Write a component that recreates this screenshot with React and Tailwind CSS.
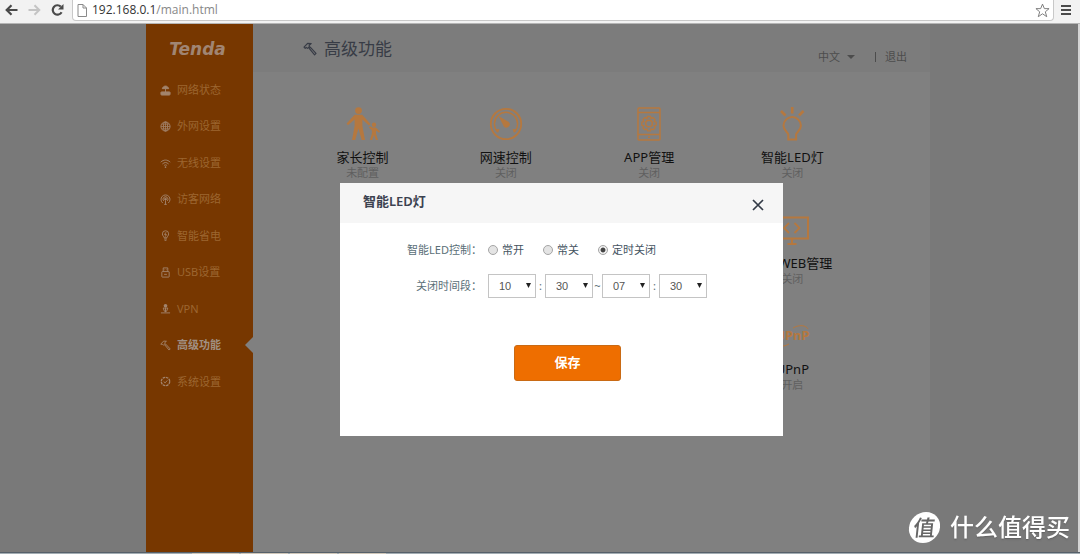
import { useState } from 'react';

const menu = [
  { id: 'status', label: '网络状态' },
  { id: 'wan', label: '外网设置' },
  { id: 'wifi', label: '无线设置' },
  { id: 'guest', label: '访客网络' },
  { id: 'power', label: '智能省电' },
  { id: 'usb', label: 'USB设置' },
  { id: 'vpn', label: 'VPN' },
  { id: 'advanced', label: '高级功能' },
  { id: 'system', label: '系统设置' },
];

const features = [
  { id: 'parent', label: '家长控制', status: '未配置' },
  { id: 'speed', label: '网速控制', status: '关闭' },
  { id: 'app', label: 'APP管理', status: '关闭' },
  { id: 'led', label: '智能LED灯', status: '关闭' },
  { id: 'web', label: '远程WEB管理', status: '关闭', lastColumn: true },
  { id: 'upnp', label: 'UPnP', status: '开启', lastColumn: true },
];

const modes = [
  { value: 'on', label: '常开' },
  { value: 'off', label: '常关' },
  { value: 'timer', label: '定时关闭' },
];

const hours = Array.from({ length: 24 }, (_, i) => String(i).padStart(2, '0'));
const minutes = ['00', '10', '20', '30', '40', '50'];

function Hammer({ className }) {
  return (
    <svg viewBox="0 0 14 14" className={className} fill="none" stroke="currentColor" strokeWidth="1.200" strokeLinejoin="round">
      <path d="M1 5.200 4.600 1.400 8.200 1.600 6.200 3.200 6.400 4.600 4.400 6.400 3.200 5.400 2.200 6.400Z" />
      <path d="M6 6.200 7.200 5.200 13 11.400 11.600 12.800Z" />
    </svg>
  );
}

function MenuIcon({ id }) {
  if (id === 'advanced') return <Hammer className="w-[11px] h-[11px] shrink-0" />;
  return (
    <svg viewBox="0 0 12 12" className="w-[11px] h-[11px] shrink-0" fill="none" stroke="currentColor">
      {id === 'status' && (
        <>
          <path d="M2.500 4C3.500 .2 8.500 .2 9.500 4ZM6 4V8" fill="currentColor" />
          <rect x="1" y="7.500" width="10" height="3.500" rx=".8" fill="currentColor" />
        </>
      )}
      {id === 'wan' && (
        <>
          <circle cx="6" cy="6" r="5" />
          <ellipse cx="6" cy="6" rx="2.300" ry="5" />
          <path d="M1 6h10M1.800 3.500h8.400M1.800 8.500h8.400M6 1v10" strokeWidth=".8" />
        </>
      )}
      {id === 'wifi' && (
        <>
          <path d="M.8 4.500C4 1.500 8 1.500 11.200 4.500M2.600 6.500C5 4.400 7 4.400 9.400 6.500M4.300 8.300C5.500 7.300 6.500 7.300 7.700 8.300" />
          <circle cx="6" cy="10" r=".9" fill="currentColor" stroke="none" />
        </>
      )}
      {id === 'guest' && (
        <>
          <path d="M3 9.800A4.900 4.900 0 1 1 9 9.800M4 7.500A2.700 2.700 0 1 1 8 7.500" />
          <circle cx="6" cy="5.600" r="1" fill="currentColor" />
          <path d="M6 7v4.500M4.600 11.300h2.800" />
        </>
      )}
      {id === 'power' && (
        <>
          <path d="M4.500 8.500C4.500 7 2.600 6.500 2.600 4.200A3.400 3.400 0 0 1 9.400 4.200C9.400 6.500 7.500 7 7.500 8.500Z" />
          <path d="M6.500 2.500 5 5h2L5.700 7.300M4.500 9.800h3M5 11.300h2" />
        </>
      )}
      {id === 'usb' && (
        <>
          <rect x="2" y="5" width="8" height="6" rx=".5" />
          <path d="M3.500 5V1h5v4M5 3h.6M6.700 3h.6M4.500 8h3" />
        </>
      )}
      {id === 'vpn' && (
        <>
          <circle cx="6" cy="3" r="2" fill="currentColor" stroke="none" />
          <path d="M3.500 5.500H8.500L7.200 9H4.800ZM6 5v5M1 10.800h10" />
        </>
      )}
      {id === 'system' && (
        <>
          <circle cx="6" cy="6" r="4.600" strokeWidth="1.400" strokeDasharray="2.800 .8" />
          <path d="M4 6 5.600 7.500 8 4.800" />
        </>
      )}
    </svg>
  );
}

function FeatureIcon({ id }) {
  return (
    <svg viewBox="0 0 34 34" className="w-[34px] h-[34px]" fill="none" stroke="currentColor" strokeWidth="1.500">
      {id === 'parent' && (
        <g fill="currentColor" stroke="none">
          <circle cx="12.500" cy="3.600" r="3.400" />
          <path d="M8.600 7.800h7.600l8.300 9.200-1.600 1.600-6.500-6v6.400l2.600 14h-3.300l-3.300-11.600L9.200 33H6l2.600-14v-6.400L2 18.200.6 16.600Z" />
          <circle cx="28" cy="17.800" r="2.200" />
          <path d="M26.400 20.500h3.400l4.200 4-1 1.200-3-2.200v3l2 6.500h-2.200l-1.800-5-1.900 5h-2.200l2-6.500v-3l-2.900-3 1-1.200Z" />
        </g>
      )}
      {id === 'speed' && (
        <>
          <circle cx="17" cy="17" r="15.200" strokeWidth="1.800" />
          <path d="M8.200 24.500A11.600 11.600 0 1 1 25.800 24.500" />
          <path d="M6 22.500l4.500-.5-1.500 4ZM28 22.500l-4.500-.5 1.500 4Z" fill="currentColor" stroke="none" />
          <path d="M9.500 9 19.800 15A3.200 3.200 0 0 1 14.800 19.500Z" fill="currentColor" stroke="none" />
        </>
      )}
      {id === 'app' && (
        <>
          <rect x="6" y="1" width="22" height="32" rx="1" />
          <path d="M6 5.500h22M6 27.500h22M16 30.300h2" />
          <circle cx="17" cy="16.500" r="3.300" />
          <path d="M15.500 9.500h3l.6 2 2-.9 2 2-.9 2 2 .6v3l-2 .6.9 2-2 2-2-.9-.6 2h-3l-.6-2-2 .9-2-2 .9-2-2-.6v-3l2-.6-.9-2 2-2 2 .9Z" strokeWidth="1.300" />
        </>
      )}
      {id === 'led' && (
        <>
          <path d="M13.300 32.500V27.500C13.300 25.500 8.500 23.500 8.500 18.800A8.700 8.700 0 0 1 25.900 18.800C25.900 23.500 21.100 25.500 21.100 27.500V32.500Z" strokeWidth="2" />
          <path d="M17.200 0v6.500M6 4l4.500 4.500M28.500 4 24 8.500" strokeWidth="2.600" />
        </>
      )}
      {id === 'web' && (
        <>
          <rect x="1" y="4.500" width="32" height="21" strokeWidth="2" />
          <path d="M14 10 9 15l5 5M19.500 10l5 5-5 5" strokeWidth="1.800" />
          <path d="M17 26v4.500M12.500 31h9" strokeWidth="2" />
        </>
      )}
    </svg>
  );
}

function UpnpMark() {
  return (
    <span className="relative flex h-[34px] items-center font-bold text-[13px]">
      UPnP
      <svg viewBox="0 0 40 24" className="absolute -left-1 top-[5px] w-10 h-6" fill="none" stroke="currentColor">
        <path d="M22 4C28 .5 35 1 37 5M18 20C12 23.500 4 23 3 19" />
      </svg>
    </span>
  );
}

function TimeSelect({ label, options, value, onChange }) {
  return (
    <span className="relative flex">
      <select
        aria-label={label}
        value={value}
        onChange={(e) => onChange(e.target.value)}
        className="appearance-none w-12 h-6 pl-[10px] border border-[#c4c4c4] bg-white text-[11px] text-[#555] font-['Liberation_Sans',sans-serif]"
      >
        {options.map((option) => (
          <option key={option}>{option}</option>
        ))}
      </select>
      <svg viewBox="0 0 6 6" className="pointer-events-none absolute right-[5px] top-[9px] w-[5px] h-[5px]" fill="#222">
        <path d="M0 0h6L3 6Z" />
      </svg>
    </span>
  );
}

function BrowserBar() {
  return (
    <div className="flex h-6 shrink-0 border-b border-[#b5b5b5] bg-[#f2f2f2] text-[#4a4a4a]">
      <div className="flex w-[72px] items-center gap-[10px] pl-[5px] pb-1">
        <button aria-label="后退">
          <svg viewBox="0 0 13 12" className="w-[13px] h-3" fill="none" stroke="currentColor" strokeWidth="2.200">
            <path d="M12.500 6H2M6.500 1.200 1.700 6l4.800 4.800" />
          </svg>
        </button>
        <button aria-label="前进" className="text-[#c4c4c4]">
          <svg viewBox="0 0 13 12" className="w-[13px] h-3" fill="none" stroke="currentColor" strokeWidth="2">
            <path d="M.5 6H11M6.500 1.200 11.300 6l-4.800 4.800" />
          </svg>
        </button>
        <button aria-label="刷新">
          <svg viewBox="0 0 13 12" className="w-[13px] h-3" fill="none" stroke="currentColor" strokeWidth="2.200">
            <path d="M10.600 8.200A4.700 4.700 0 1 1 9.800 2.600" />
            <path d="M12.500 0v5.500H7Z" fill="currentColor" stroke="none" />
          </svg>
        </button>
      </div>
      <div className="flex h-[21px] flex-1 items-center rounded-b-sm border border-t-0 border-[#c8c8c8] bg-white pl-1 pr-[3px]">
        <svg viewBox="0 0 10 13" className="w-[10px] h-[13px]" fill="none" stroke="#8a8a8a">
          <path d="M1 .5h5L9.500 4v8.500H1ZM6 .5V4h3.500" />
        </svg>
        <p className="ml-[5px] flex-1 text-[12px] leading-5 text-[#888] font-['Open_Sans',sans-serif]">
          <span className="text-[#333]">192.168.0.1</span>/main.html
        </p>
        <button aria-label="收藏">
          <svg viewBox="0 0 16 16" className="w-[15px] h-[15px]" fill="none" stroke="#777">
            <path d="M8 1.200 10 6h5l-4 3.400 1.500 5.200L8 11.500l-4.500 3.100L5 9.400 1 6h5Z" strokeLinejoin="round" />
          </svg>
        </button>
      </div>
      <button aria-label="菜单" className="flex w-[26px] flex-col gap-[2px] pl-[7px] pt-[5px]">
        <span className="h-[2px] w-[10px] bg-[#4a4a4a]" />
        <span className="h-[2px] w-[10px] bg-[#4a4a4a]" />
        <span className="h-[2px] w-[10px] bg-[#4a4a4a]" />
      </button>
    </div>
  );
}

function Sidebar() {
  return (
    <aside className="w-[107px] shrink-0 bg-[#773700]">
      <div className="flex h-12 items-center justify-center pt-1 pr-1 font-['DejaVu_Sans',sans-serif] text-[17px] font-bold italic text-[#a08573]">
        Tenda
      </div>
      <nav className="grid h-[328px] grid-rows-9">
        {menu.map((item) => (
          <a
            key={item.id}
            href={`#${item.id}`}
            className={
              item.id === 'advanced'
                ? 'relative flex items-center gap-[6px] pl-[14px] text-[11px] font-bold text-[#a08f82]'
                : 'relative flex items-center gap-[6px] pl-[14px] text-[11px] text-[#9c6630]'
            }
          >
            <span className="text-[#a3846c]">
              <MenuIcon id={item.id} />
            </span>
            {item.label}
            {item.id === 'advanced' && (
              <span className="absolute right-0 top-1/2 -translate-y-1/2 border-y-8 border-r-8 border-y-transparent border-r-[#808080]" />
            )}
          </a>
        ))}
      </nav>
    </aside>
  );
}

function LedDialog() {
  const [mode, setMode] = useState('timer');
  const [time, setTime] = useState({ fromHour: '10', fromMinute: '30', toHour: '07', toMinute: '30' });

  const update = (key) => (value) => setTime((prev) => ({ ...prev, [key]: value }));

  return (
    <div className="fixed inset-0 flex items-start justify-center pl-[43px] pt-[183px]">
      <div role="dialog" aria-labelledby="led-title" className="w-[443px] bg-white pb-[55px]">
        <div className="flex h-10 items-start justify-between bg-[#f6f6f6] pl-[23px] pr-[19px]">
          <h2 id="led-title" className="pt-2 text-[13px] leading-5 font-semibold text-[#3c4250]">智能LED灯</h2>
          <button aria-label="关闭" className="pt-4 text-[#333b47]">
            <svg viewBox="0 0 12 12" className="w-3 h-3" fill="none" stroke="currentColor" strokeWidth="1.700">
              <path d="M1 1l10 10M11 1 1 11" />
            </svg>
          </button>
        </div>

        <form onSubmit={(e) => e.preventDefault()} className="pt-[17px] text-[11px] text-[#5b6f78]">
          <fieldset className="flex h-5 items-center">
            <legend className="float-left w-[142px] text-right leading-5">智能LED控制：</legend>
            <div className="flex items-center gap-[19px] pl-[6px] text-[#44535f]">
              {modes.map((item) => (
                <label key={item.value} className="flex items-center gap-1">
                  <input
                    type="radio"
                    name="mode"
                    checked={mode === item.value}
                    onChange={() => setMode(item.value)}
                    className="appearance-none w-[10px] h-[10px] rounded-full border border-[#a5a5a5] bg-[#e4e4e4] checked:bg-radial checked:from-[#444] checked:from-35% checked:to-[#eee] checked:to-50%"
                  />
                  {item.label}
                </label>
              ))}
            </div>
          </fieldset>

          <div className="mt-[14px] flex items-center">
            <span className="w-[142px] text-right">关闭时间段：</span>
            <div className="flex items-center pl-[6px]">
              <TimeSelect label="开始小时" options={hours} value={time.fromHour} onChange={update('fromHour')} />
              <span className="w-[9px] text-center">:</span>
              <TimeSelect label="开始分钟" options={minutes} value={time.fromMinute} onChange={update('fromMinute')} />
              <span className="w-[9px] text-center">~</span>
              <TimeSelect label="结束小时" options={hours} value={time.toHour} onChange={update('toHour')} />
              <span className="w-[9px] text-center">:</span>
              <TimeSelect label="结束分钟" options={minutes} value={time.toMinute} onChange={update('toMinute')} />
            </div>
          </div>

          <div className="mt-[47px] flex justify-center pl-3">
            <button className="h-9 w-[107px] rounded-[3px] border border-[#c96a14] bg-[#ee6e00] text-[13px] font-bold text-white">
              保存
            </button>
          </div>
        </form>
      </div>
    </div>
  );
}

export default function App() {
  return (
    <div className="flex h-screen flex-col overflow-hidden bg-[#797979] font-['Noto_Sans','Noto_Sans_CJK_SC',sans-serif]">
      <BrowserBar />

      <div className="flex flex-1 justify-center border-r-2 border-[#d5d5d5] pr-[2px]">
        <Sidebar />
        <main className="w-[677px] bg-[#808080]">
          <header className="flex h-12 items-center justify-between bg-[#7c7c7c] pl-[50px] pr-[23px]">
            <h1 className="flex items-center gap-[7px] pt-[2px] text-[17px] text-[#383c46]">
              <Hammer className="w-[14px] h-[14px]" />
              高级功能
            </h1>
            <div className="flex items-center pt-[18px] text-[11px] text-[#4c4c4c]">
              <button className="flex items-center gap-[7px]">
                中文
                <span className="border-x-4 border-t-4 border-x-transparent border-t-[#4c4c4c]" />
              </button>
              <span className="ml-5 h-[10px] w-px bg-[#4c4c4c]" />
              <a href="#logout" className="ml-[9px]">退出</a>
            </div>
          </header>

          <section className="grid grid-cols-4 gap-y-[33px] pl-[38px] pr-[66px] pt-[35px]">
            {features.map((item) => (
              <a
                key={item.id}
                href={`#${item.id}`}
                className={item.lastColumn ? 'col-start-4 flex flex-col items-center' : 'flex flex-col items-center'}
              >
                <span className="text-[#b5783f]">
                  {item.id === 'upnp' ? <UpnpMark /> : <FeatureIcon id={item.id} />}
                </span>
                <span className="mt-[7px] text-[13px] leading-[18px] text-[#111]">{item.label}</span>
                <span className="-mt-px text-[11px] leading-[15px] text-[#5f5f5f]">{item.status}</span>
              </a>
            ))}
          </section>
        </main>
      </div>

      {/* Taskbar edge */}
      <footer className="flex h-[2px] shrink-0 gap-[2px] border-t border-[#56606a] bg-[#a3adb3] pl-48">
        <span className="w-[47px] bg-[#cfc6b8]" />
        <span className="w-[47px] bg-[#cfc6b8]" />
        <span className="w-[47px] bg-[#cfc6b8]" />
        <span className="w-[47px] bg-[#cfc6b8]" />
      </footer>

      <LedDialog />

      <div className="absolute bottom-[11px] right-[10px] flex items-center gap-[10px] text-white">
        <span className="flex h-[31px] w-[31px] items-center justify-center rounded-full bg-white text-[22px] font-medium -skew-x-6 text-[#666]">
          值
        </span>
        <span className="text-[24px] leading-8 font-medium text-shadow-sm">什么值得买</span>
      </div>
    </div>
  );
}
